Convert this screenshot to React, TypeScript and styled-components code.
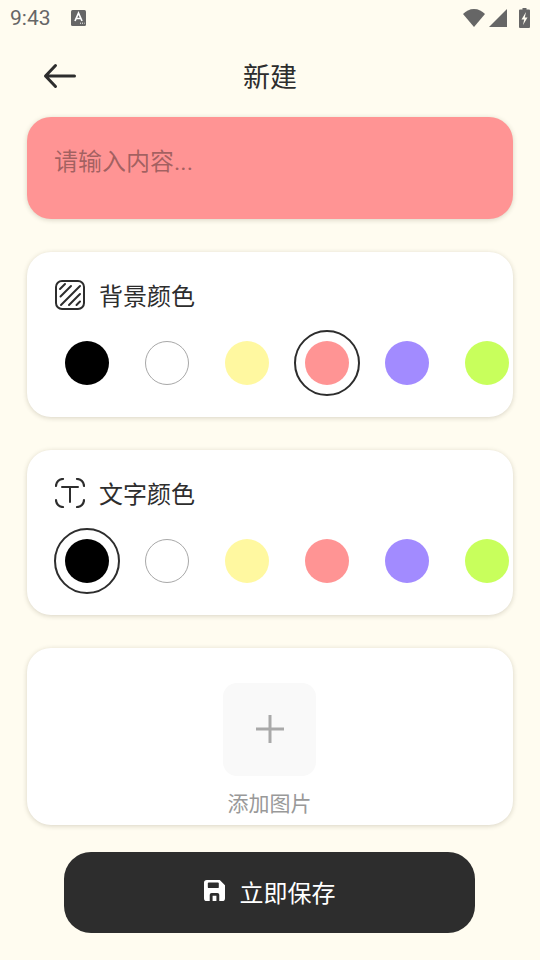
import React, {useState} from 'react'
import styled, {createGlobalStyle} from 'styled-components'

const GlobalStyle = createGlobalStyle`
  html, body {
    margin: 0;
    padding: 0;
    background: #fffcf0;
  }
  * {
    box-sizing: border-box;
  }
`

const Page = styled.div`
  width: 540px;
  height: 960px;
  overflow: hidden;
  background: #fffcf0;
  color: #2d2d2d;
  font-family: Roboto, 'Noto Sans CJK SC', sans-serif;
`

const StatusBar = styled.div`
  height: 36px;
  padding: 0 10px;
  display: flex;
  align-items: center;
  justify-content: space-between;
  color: #666;
`

const StatusLeft = styled.div`
  display: flex;
  align-items: center;
  gap: 20px;
`

const Time = styled.span`
  font-size: 21px;
  line-height: 36px;
`

const StatusRight = styled.div`
  display: flex;
  align-items: center;
  gap: 4px;
`

const Header = styled.header`
  height: 81px;
  padding: 2px 27px 0;
  display: flex;
  align-items: center;
  position: relative;
  justify-content: center;
`

const BackButton = styled.button`
  position: absolute;
  left: 42px;
  top: 24px;
  width: 36px;
  height: 32px;
  padding: 0;
  border: 0;
  background: none;
  display: flex;
  color: #2d2d2d;
`

const Title = styled.h1`
  margin: 0;
  font-size: 27px;
  font-weight: 400;
  line-height: 40px;
`

const Content = styled.main`
  padding: 0 27px;
  display: flex;
  flex-direction: column;
  gap: 33px;
`

const Card = styled.section`
  width: 486px;
  background: #fff;
  border-radius: 24px;
  box-shadow: 0 1px 5px rgba(60, 50, 20, 0.2);
`

const InputCard = styled(Card)<{$bg: string}>`
  height: 102px;
  padding: 0 27px;
  display: flex;
  align-items: center;
  background: ${p => p.$bg};
`

const TextInput = styled.input`
  width: 100%;
  margin-top: -12px;
  border: 0;
  outline: 0;
  padding: 0;
  background: transparent;
  font: inherit;
  font-size: 24px;
  line-height: 36px;
  color: #2d2d2d;

  &::placeholder {
    color: rgba(60, 40, 40, 0.47);
    opacity: 1;
  }
`

const ColorCard = styled(Card)`
  height: 165px;
  padding: 28px 0 0 27px;
`

const CardTitle = styled.div`
  height: 30px;
  display: flex;
  align-items: center;
  gap: 14px;

  svg {
    margin-left: 1px;
    flex: none;
  }
`

const CardLabel = styled.span`
  padding-top: 4px;
  font-size: 24px;
  line-height: 30px;
`

const Swatches = styled.div`
  margin-top: 20px;
  display: flex;
  gap: 14px;
`

const SwatchRing = styled.button<{$active: boolean}>`
  flex: none;
  width: 66px;
  height: 66px;
  padding: 0;
  background: none;
  border-radius: 50%;
  border: 2px solid ${p => (p.$active ? '#2d2d2d' : 'transparent')};
  display: flex;
  align-items: center;
  justify-content: center;
`

const SwatchDot = styled.span<{$color: string; $outlined: boolean}>`
  width: 44px;
  height: 44px;
  border-radius: 50%;
  background: ${p => p.$color};
  border: ${p => (p.$outlined ? '1px solid #a8a8a8' : '0')};
`

const ImageCard = styled(Card)`
  height: 177px;
  padding: 35px 1px 0 0;
  display: flex;
  flex-direction: column;
  align-items: center;
`

const AddTile = styled.button`
  width: 93px;
  height: 93px;
  padding: 0 0 1px;
  border: 0;
  border-radius: 14px;
  background: #f9f9f9;
  display: flex;
  align-items: center;
  justify-content: center;
  color: #a9a9a9;
`

const AddLabel = styled.span`
  margin-top: 13px;
  font-size: 21px;
  line-height: 30px;
  color: #999;
`

const SaveButton = styled.button`
  width: 411px;
  height: 81px;
  margin: 27px 0 0 64px;
  padding: 0 0 2px;
  border: 0;
  border-radius: 27px;
  background: #2d2d2d;
  color: #fff;
  font: inherit;
  font-size: 24px;
  display: flex;
  align-items: center;
  justify-content: center;
  gap: 15px;

  svg {
    margin-bottom: 2px;
  }
`

const colors = ['#000000', '#ffffff', '#fff8a0', '#ff9494', '#a28bff', '#c8ff5c']

const ColorPicker = ({value, onChange}: {value: string; onChange: (c: string) => void}) => (
  <Swatches>
    {colors.map(c => (
      <SwatchRing key={c} $active={c === value} onClick={() => onChange(c)}>
        <SwatchDot $color={c} $outlined={c === '#ffffff'} />
      </SwatchRing>
    ))}
  </Swatches>
)

const App = () => {
  const [bg, setBg] = useState('#ff9494')
  const [fg, setFg] = useState('#000000')
  return (
    <Page>
      <GlobalStyle />
      <StatusBar>
        <StatusLeft>
          <Time>9:43</Time>
          <svg width="15" height="16" viewBox="0 0 15 16">
            <rect width="15" height="16" rx="1.5" fill="#666" />
            <path d="M4 11 7.5 3 11 11M5.3 8.5h4.4" fill="none" stroke="#fff" strokeWidth="1.7" />
            <path d="M9 13.2h1M11 13.2h1M13 13.2h.6" stroke="#fff" strokeWidth="1" />
          </svg>
        </StatusLeft>
        <StatusRight>
          <svg width="22" height="18" viewBox="0 0 22 18">
            <path d="M0 5C3 2 6.500 0 11 0s8 2 11 5L11 18Z" fill="#666" />
          </svg>
          <svg width="18" height="18" viewBox="0 0 18 18">
            <path d="M18 0v18H0Z" fill="#666" />
          </svg>
          <svg width="11" height="20" viewBox="0 0 11 20" style={{marginLeft: 8}}>
            <path d="M3.5 0h4v1.500H10a1 1 0 0 1 1 1V19a1 1 0 0 1-1 1H1a1 1 0 0 1-1-1V2.500a1 1 0 0 1 1-1h2.500Z" fill="#666" />
            <path d="M7 4 2.500 11.500h2.700L4 17 8.500 9.500H5.800Z" fill="#fffcf0" />
          </svg>
        </StatusRight>
      </StatusBar>
      <Header>
        <BackButton aria-label="返回">
          <svg width="36" height="32" viewBox="0 0 36 32" fill="none" stroke="currentColor" strokeWidth="3" strokeLinecap="round" strokeLinejoin="round">
            <path d="M3.500 16h29M13.500 5.500 3.500 16l10 10.500" />
          </svg>
        </BackButton>
        <Title>新建</Title>
      </Header>
      <Content>
        <InputCard $bg={bg}>
          <TextInput placeholder="请输入内容..." />
        </InputCard>
        <ColorCard>
          <CardTitle>
            <svg width="30" height="30" viewBox="0 0 30 30" fill="none" stroke="currentColor" strokeLinecap="round">
              <rect x="1" y="1" width="28" height="28" rx="6" strokeWidth="2" />
              <path d="M5 9 10 4M5.500 16.500 16 6M6 25 25 6M14 25 25 14M21.500 25l3.500-3.500" strokeWidth="2" />
            </svg>
            <CardLabel>背景颜色</CardLabel>
          </CardTitle>
          <ColorPicker value={bg} onChange={setBg} />
        </ColorCard>
        <ColorCard>
          <CardTitle>
            <svg width="30" height="30" viewBox="0 0 30 30" fill="none" stroke="currentColor" strokeWidth="2" strokeLinecap="round">
              <path d="M1 8a7 7 0 0 1 7-7M22 1a7 7 0 0 1 7 7M29 22a7 7 0 0 1-7 7M8 29a7 7 0 0 1-7-7" strokeWidth="2.200" />
              <path d="M7 9h16M15 9v15" />
            </svg>
            <CardLabel>文字颜色</CardLabel>
          </CardTitle>
          <ColorPicker value={fg} onChange={setFg} />
        </ColorCard>
        <ImageCard>
          <AddTile aria-label="添加图片">
            <svg width="28" height="28" viewBox="0 0 28 28" stroke="currentColor" strokeWidth="3">
              <path d="M0 14h28M14 0v28" />
            </svg>
          </AddTile>
          <AddLabel>添加图片</AddLabel>
        </ImageCard>
      </Content>
      <SaveButton>
        <svg width="21" height="21" viewBox="0 0 22 22" fill="currentColor">
          <path fillRule="evenodd" d="M3 0h13.500L22 5.500V19a3 3 0 0 1-3 3H3a3 3 0 0 1-3-3V3a3 3 0 0 1 3-3Zm1 3.500v4a1 1 0 0 0 1 1h9.500a1 1 0 0 0 1-1v-4a1 1 0 0 0-1-1H5a1 1 0 0 0-1 1ZM6 22v-6.500a2 2 0 0 1 2-2h6a2 2 0 0 1 2 2V22h-3v-5.500H9V22Z" />
        </svg>
        立即保存
      </SaveButton>
    </Page>
  )
}

export default App
